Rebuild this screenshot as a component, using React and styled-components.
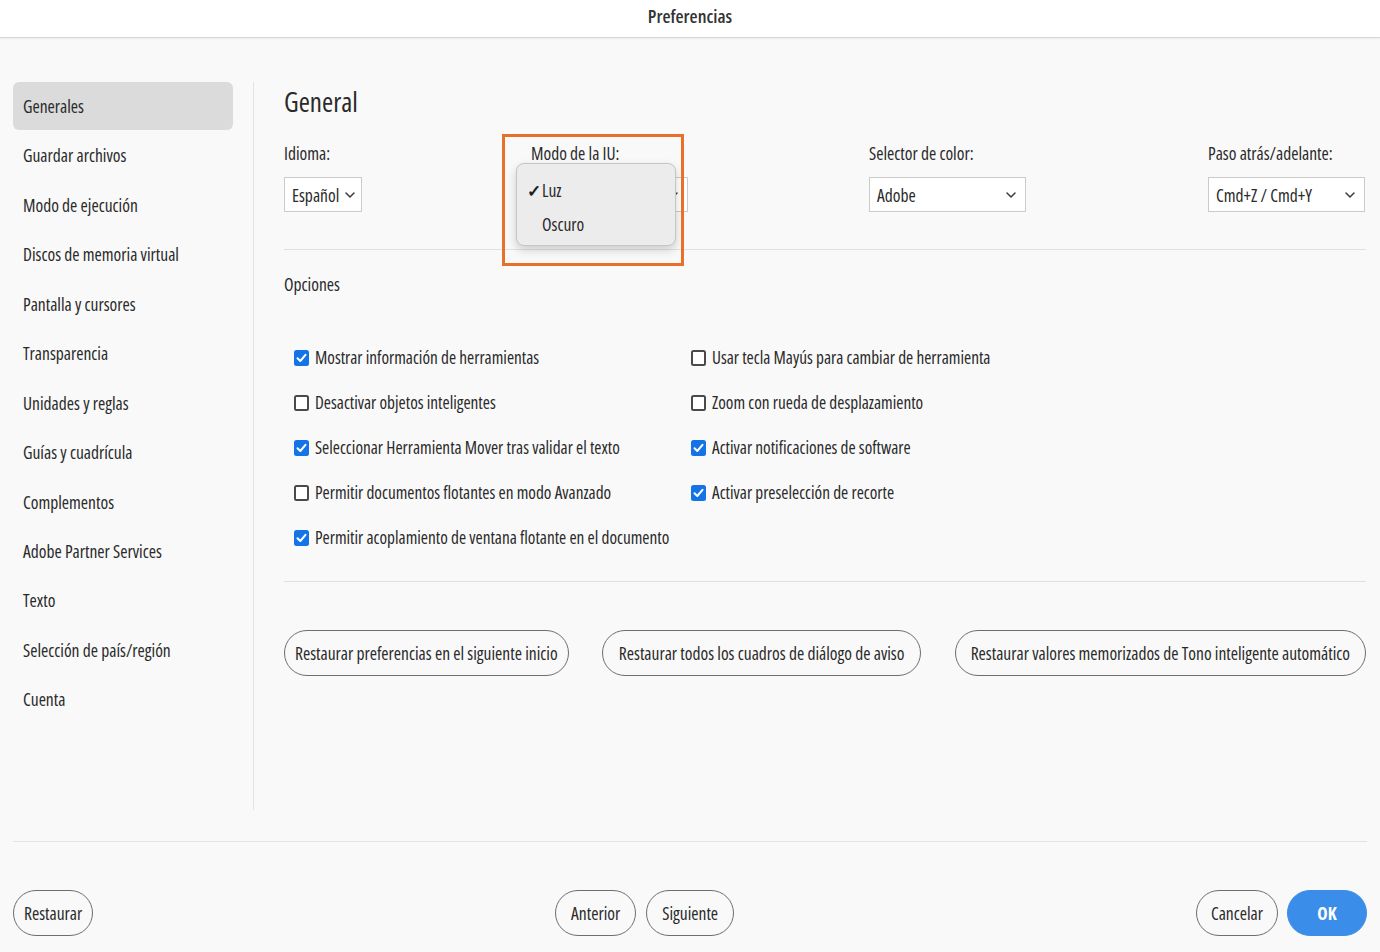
import React from 'react';
import styled, { createGlobalStyle } from 'styled-components';

const Global = createGlobalStyle`
  html, body { margin: 0; padding: 0; }
  body {
    background: #f9f9f9;
    font-family: "Open Sans", "Noto Sans", sans-serif;
    font-stretch: 75%;
    color: #2a2a2a;
    -webkit-font-smoothing: antialiased;
  }
  * { box-sizing: border-box; }
`;

const FS = '17.5px';

const Page = styled.div`
  width: 1380px;
  height: 952px;
  display: flex;
  flex-direction: column;
  overflow: hidden;
`;

const TitleBar = styled.header`
  height: 38px;
  flex: none;
  background: #ffffff;
  border-bottom: 1px solid #d6d6d6;
  box-shadow: 0 1px 2px rgba(0, 0, 0, 0.06);
  display: flex;
  align-items: center;
  justify-content: center;
  padding-bottom: 6px;
  font-size: 18.5px;
  font-weight: 600;
  color: #333;
`;

const Body = styled.div`
  height: 772px;
  flex: none;
  display: flex;
`;

const Sidebar = styled.nav`
  width: 253px;
  flex: none;
  padding: 44px 20px 0 13px;
  display: flex;
  flex-direction: column;
  gap: 1.45px;
`;

const NavItem = styled.div`
  height: 48px;
  display: flex;
  align-items: center;
  padding-left: 10px;
  font-size: ${FS};
  border-radius: 6px;
  background: ${p => (p.$active ? '#dbdbdb' : 'transparent')};
`;

const Divider = styled.div`
  width: 1px;
  flex: none;
  margin-top: 44px;
  background: #e2e2e2;
`;

const Main = styled.main`
  flex: 1;
  padding: 46px 14px 0 30px;
  display: flex;
  flex-direction: column;
`;

const Heading = styled.h1`
  margin: 0;
  font-size: 27px;
  line-height: 36px;
  font-weight: 400;
  color: #2a2a2a;
`;

const FieldRow = styled.div`
  margin-top: 22px;
  display: grid;
  grid-template-columns: 247px 338px 339px 1fr;
`;

const Field = styled.div`
  position: relative;
  display: flex;
  flex-direction: column;
  align-items: flex-start;
  gap: 13px;
`;

const Label = styled.div`
  font-size: ${FS};
  line-height: 22px;
`;

const Select = styled.div`
  width: ${p => p.$w}px;
  height: 35px;
  background: #ffffff;
  border: 1px solid #cbcbcb;
  display: flex;
  align-items: center;
  justify-content: space-between;
  gap: 6px;
  padding: 0 9px 0 7px;
  font-size: ${FS};
  white-space: nowrap;
`;

const Chevron = () => (
  <svg width="10" height="6" viewBox="0 0 10 6" style={{ flex: 'none' }}>
    <path d="M1 1 L5 5 L9 1" fill="none" stroke="#3a3a3a" strokeWidth="1.5" strokeLinecap="round" strokeLinejoin="round" />
  </svg>
);

const Highlight = styled.div`
  position: absolute;
  left: -29px;
  top: -8px;
  width: 182px;
  height: 132px;
  border: 3px solid #e8702a;
  pointer-events: none;
  z-index: 3;
`;

const Menu = styled.div`
  position: absolute;
  left: -15px;
  top: 21px;
  width: 160px;
  height: 83px;
  background: #ececec;
  border: 1px solid #c6c6c6;
  border-radius: 8px;
  box-shadow: 0 4px 10px rgba(0, 0, 0, 0.18);
  padding-top: 9px;
  z-index: 2;
`;

const MenuItem = styled.div`
  height: 34px;
  display: flex;
  align-items: center;
  padding-left: 10px;
  font-size: ${FS};
`;

const Check = styled.span`
  width: 15px;
  font-size: 17px;
  font-weight: 700;
  color: #1f1f1f;
  visibility: ${p => (p.$on ? 'visible' : 'hidden')};
`;

const Rule = styled.div`
  height: 1px;
  background: #e1e1e1;
  margin-top: ${p => p.$mt}px;
`;

const SectionLabel = styled.div`
  margin-top: 23px;
  font-size: ${FS};
  line-height: 22px;
`;

const OptionsGrid = styled.div`
  margin-top: 40px;
  padding-left: 10px;
  display: grid;
  grid-template-columns: 397px 1fr;
  grid-auto-rows: 45px;
`;

const Option = styled.label`
  display: flex;
  align-items: center;
  gap: 6px;
  font-size: 17.3px;
`;

const Box = styled.span`
  width: 15px;
  height: 16px;
  flex: none;
  border-radius: 2.5px;
  display: flex;
  align-items: center;
  justify-content: center;
  background: ${p => (p.$on ? '#1473e6' : '#ffffff')};
  border: ${p => (p.$on ? 'none' : '2px solid #4a4a4a')};
`;

const ButtonRow = styled.div`
  margin-top: 48px;
  display: flex;
  justify-content: space-between;
`;

const Pill = styled.button`
  height: 46px;
  padding: 0 ${p => p.$px ?? 11}px;
  border-radius: 23px;
  border: 1.5px solid ${p => (p.$primary ? '#3a8ee9' : '#6e6e6e')};
  background: ${p => (p.$primary ? '#3a8ee9' : 'transparent')};
  color: ${p => (p.$primary ? '#ffffff' : '#2a2a2a')};
  font-family: inherit;
  font-stretch: 75%;
  font-size: ${FS};
  font-weight: ${p => (p.$primary ? 700 : 400)};
  min-width: ${p => p.$min || 0}px;
  white-space: nowrap;
`;

const Footer = styled.footer`
  margin: 31px 13px 0 13px;
  border-top: 1px solid #e3e3e3;
  padding-top: 48px;
  display: flex;
  justify-content: space-between;
  width: 1354px;
`;

const Group = styled.div`
  display: flex;
  gap: ${p => p.$gap}px;
`;

const navItems = [
  'Generales', 'Guardar archivos', 'Modo de ejecución', 'Discos de memoria virtual',
  'Pantalla y cursores', 'Transparencia', 'Unidades y reglas', 'Guías y cuadrícula',
  'Complementos', 'Adobe Partner Services', 'Texto', 'Selección de país/región', 'Cuenta',
];

const options = [
  ['Mostrar información de herramientas', true],
  ['Usar tecla Mayús para cambiar de herramienta', false],
  ['Desactivar objetos inteligentes', false],
  ['Zoom con rueda de desplazamiento', false],
  ['Seleccionar Herramienta Mover tras validar el texto', true],
  ['Activar notificaciones de software', true],
  ['Permitir documentos flotantes en modo Avanzado', false],
  ['Activar preselección de recorte', true],
  ['Permitir acoplamiento de ventana flotante en el documento', true],
];

const Tick = () => (
  <svg width="11" height="10" viewBox="0 0 11 10">
    <path d="M1.5 5.2 L4.3 8 L9.5 1.8" fill="none" stroke="#fff" strokeWidth="2" strokeLinecap="round" strokeLinejoin="round" />
  </svg>
);

export default function App() {
  return (
    <Page>
      <Global />
      <TitleBar>Preferencias</TitleBar>
      <Body>
        <Sidebar>
          {navItems.map((n, i) => (
            <NavItem key={n} $active={i === 0}>{n}</NavItem>
          ))}
        </Sidebar>
        <Divider />
        <Main>
          <Heading>General</Heading>
          <FieldRow>
            <Field>
              <Label>Idioma:</Label>
              <Select $w={78}>Español <Chevron /></Select>
            </Field>
            <Field>
              <Label>Modo de la IU:</Label>
              <Select $w={157}><span /><Chevron /></Select>
              <Menu>
                <MenuItem><Check $on>✓</Check>Luz</MenuItem>
                <MenuItem><Check>✓</Check>Oscuro</MenuItem>
              </Menu>
              <Highlight />
            </Field>
            <Field>
              <Label>Selector de color:</Label>
              <Select $w={157}>Adobe <Chevron /></Select>
            </Field>
            <Field>
              <Label>Paso atrás/adelante:</Label>
              <Select $w={157}>Cmd+Z / Cmd+Y <Chevron /></Select>
            </Field>
          </FieldRow>
          <Rule $mt={37} />
          <SectionLabel>Opciones</SectionLabel>
          <OptionsGrid>
            {options.map(([t, on]) => (
              <Option key={t}>
                <Box $on={on}>{on && <Tick />}</Box>
                {t}
              </Option>
            ))}
          </OptionsGrid>
          <Rule $mt={21} />
          <ButtonRow>
            <Pill $px={10}>Restaurar preferencias en el siguiente inicio</Pill>
            <Pill $px={16}>Restaurar todos los cuadros de diálogo de aviso</Pill>
            <Pill $px={15}>Restaurar valores memorizados de Tono inteligente automático</Pill>
          </ButtonRow>
        </Main>
      </Body>
      <Footer>
        <Pill $px={10} $min={80}>Restaurar</Pill>
        <Group $gap={10}>
          <Pill $px={15} $min={80}>Anterior</Pill>
          <Pill $px={15} $min={80}>Siguiente</Pill>
        </Group>
        <Group $gap={9}>
          <Pill $px={14} $min={80}>Cancelar</Pill>
          <Pill $primary $min={80}>OK</Pill>
        </Group>
      </Footer>
    </Page>
  );
}
